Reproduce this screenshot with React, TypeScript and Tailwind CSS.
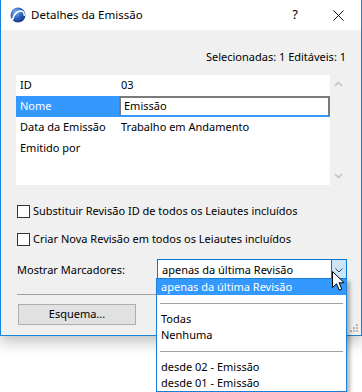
import React from "react";

const font = { fontFamily: '"Noto Sans", "Open Sans", sans-serif' };

function AppIcon() {
  return (
    <svg width="16" height="16" viewBox="0 0 16 16">
      <defs>
        <radialGradient id="ball" cx="0.35" cy="0.3" r="0.8">
          <stop offset="0" stopColor="#7fb0f0" />
          <stop offset="0.6" stopColor="#2457b8" />
          <stop offset="1" stopColor="#14327a" />
        </radialGradient>
      </defs>
      <circle cx="8" cy="8" r="7.5" fill="url(#ball)" />
      <path d="M2.5 13 C4 6 9 2.5 13.5 5" stroke="#fff" strokeWidth="1.6" fill="none" />
      <path d="M13.5 5 L14.5 9" stroke="#fff" strokeWidth="1.4" fill="none" />
    </svg>
  );
}

function Chevron({ up }: { up?: boolean }) {
  return (
    <svg width="9" height="6" viewBox="0 0 9 6">
      <path d={up ? "M1 5 L4.5 1.5 L8 5" : "M1 1 L4.5 4.5 L8 1"} stroke="#c4c4c4" strokeWidth="1.6" fill="none" />
    </svg>
  );
}

function Checkbox({ label }: { label: string }) {
  return (
    <div className="flex items-center h-[16px]">
      <div className="w-[13px] h-[13px] border border-[#333] bg-white" />
      <span className="ml-[3px]">{label}</span>
    </div>
  );
}

const rows = [
  { k: "ID", v: "03" },
  { k: "Nome", v: "Emissão", sel: true },
  { k: "Data da Emissão", v: "Trabalho em Andamento" },
  { k: "Emitido por", v: "" },
];

export default function App() {
  return (
    <div className="relative w-[362px] h-[392px] bg-white overflow-hidden text-[11px] text-black" style={font}>
      {/* dialog */}
      <div className="w-[362px] h-[336px] border-x border-b border-[#1883d7] bg-[#f0f0f0] flex flex-col shadow-[0_6px_14px_rgba(0,0,0,0.25)]">
        <div className="h-[30px] bg-white flex items-center pl-[9px] shrink-0 text-[11.5px]">
          <AppIcon />
          <span className="ml-[5px]">Detalhes da Emissão</span>
          <span className="ml-auto mr-[35px] text-[13px]">?</span>
          <svg width="11" height="11" viewBox="0 0 11 11" className="mr-[17px]">
            <path d="M0.5 0.5 L10.5 10.5 M10.5 0.5 L0.5 10.5" stroke="#111" strokeWidth="1" />
          </svg>
        </div>

        <div className="flex justify-end pr-[15px] mt-[19px] h-[16px] leading-[16px]">
          Selecionadas: 1 Editáveis: 1
        </div>

        <div className="flex mt-[10px] ml-[15px] mr-[15px] h-[110px]">
          <div className="flex-1 bg-white">
            {rows.map((r) => (
              <div key={r.k} className="flex h-[21px] items-center">
                <div className={"w-[103px] h-full flex items-center pl-[4px] " + (r.sel ? "bg-[#3399ff] text-white" : "")}>
                  {r.k}
                </div>
                {r.sel ? (
                  <div className="flex-1 h-full border-2 border-[#7a7a7a] border-b-[#3399ff] flex items-center pl-[3px]">
                    {r.v}
                  </div>
                ) : (
                  <div className="flex-1 pl-[2px]">{r.v}</div>
                )}
              </div>
            ))}
          </div>
          <div className="w-[16px] flex flex-col items-center justify-between py-[6px]">
            <Chevron up />
            <Chevron />
          </div>
        </div>

        <div className="ml-[16px] mt-[18px] flex flex-col gap-[12px]">
          <Checkbox label="Substituir Revisão ID de todos os Leiautes incluídos" />
          <Checkbox label="Criar Nova Revisão em todos os Leiautes incluídos" />
        </div>

        <div className="flex items-center ml-[16px] mt-[12px] h-[22px]">
          <span className="w-[140px]">Mostrar Marcadores:</span>
          <div className="flex w-[190px] h-[22px] border border-[#0078d7] bg-white">
            <div className="flex-1 flex items-center pl-[4px]">apenas da última Revisão</div>
            <div className="w-[15px] bg-[#cce4f7] border-l border-[#0078d7] flex items-center justify-center">
              <svg width="8" height="5" viewBox="0 0 8 5">
                <path d="M0.5 0.5 L4 4 L7.5 0.5" stroke="#444" strokeWidth="1" fill="none" />
              </svg>
            </div>
          </div>
        </div>

        <div className="mx-[16px] mt-[13px] h-px bg-[#a0a0a0]" />

        <div className="flex items-end flex-1 pb-[10px] pl-[17px]">
          <button className="w-[118px] h-[21px] bg-[#e1e1e1] border border-[#adadad] flex items-center justify-center">
            Esquema...
          </button>
          <div className="ml-auto mr-[3px] mb-[-7px] grid grid-cols-3 gap-[1px]">
            {[0, 1, 2, 3, 4, 5, 6, 7, 8].map((i) => (
              <div key={i} className={"w-[2px] h-[2px] " + ([2, 4, 5, 6, 7, 8].includes(i) ? "bg-[#b8b8b8]" : "")} />
            ))}
          </div>
        </div>
      </div>

      {/* dropdown list */}
      <div className="absolute left-[156px] top-[278px] w-[191px] h-[114px] bg-white border border-[#1c7fd6] shadow-[3px_3px_4px_rgba(0,0,0,0.3)]">
        <div className="h-[16px] bg-[#3399ff] text-white pl-[4px] leading-[16px]">apenas da última Revisão</div>
        <div className="h-[16px] flex items-center px-[3px]"><div className="h-px w-full bg-[#a0a0a0]" /></div>
        <div className="h-[16px] pl-[4px] leading-[16px]">Todas</div>
        <div className="h-[16px] pl-[4px] leading-[16px]">Nenhuma</div>
        <div className="h-[16px] flex items-center px-[3px]"><div className="h-px w-full bg-[#a0a0a0]" /></div>
        <div className="h-[16px] pl-[4px] leading-[16px]">desde 02 - Emissão</div>
        <div className="h-[16px] pl-[4px] leading-[16px]">desde 01 - Emissão</div>
      </div>

      {/* cursor */}
      <svg className="absolute left-[332px] top-[271px]" width="14" height="21" viewBox="0 0 14 21">
        <path d="M0.5 0.5 L0.5 16.5 L4.5 12.8 L7.3 19.2 L9.8 18.1 L7.1 11.8 L12.2 11.8 Z" fill="#fff" stroke="#000" strokeWidth="1" strokeLinejoin="miter" />
      </svg>
    </div>
  );
}
